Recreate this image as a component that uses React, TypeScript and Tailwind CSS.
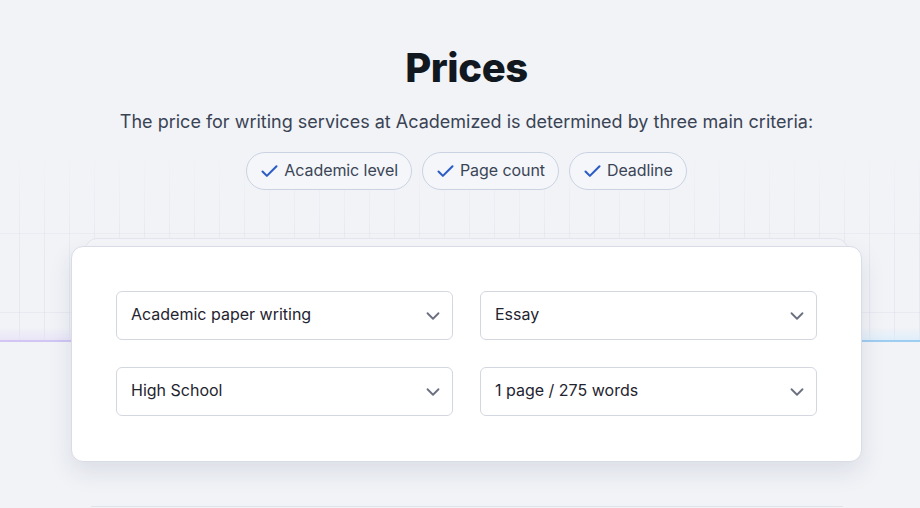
import { Check, ChevronDown } from "lucide-react";

const CRITERIA = ["Academic level", "Page count", "Deadline"];

const FIELDS = [
  "Academic paper writing",
  "Essay",
  "High School",
  "1 page / 275 words",
];

function Select({ value }: { value: string }) {
  return (
    <button
      type="button"
      className="flex h-[49px] w-full items-center justify-between rounded-md border border-[#d3d7df] bg-white pl-[14px] pr-[8px] text-left text-[16px] text-[#1f2430]"
    >
      <span className="-mt-[3px]">{value}</span>
      <ChevronDown size={22} strokeWidth={2} className="text-[#6b7080]" />
    </button>
  );
}

export default function App() {
  return (
    <div className="relative min-h-[508px] overflow-hidden bg-[#f1f3f7] font-['Inter',sans-serif]">
      {/* Background grid band, fades in from the top */}
      <div
        aria-hidden
        className="absolute inset-x-0 top-[154px] h-[186px] bg-[linear-gradient(to_right,rgba(205,210,224,0.3)_1px,transparent_1px),linear-gradient(to_bottom,rgba(205,210,224,0.25)_1px,transparent_1px)] bg-[size:25px_100%,100%_79px] bg-[position:19px_0,0_0] [mask-image:linear-gradient(to_bottom,transparent,black_55%)]"
      />
      {/* Glow line behind the card */}
      <div
        aria-hidden
        className="absolute inset-x-0 top-[328px] h-[12px] bg-gradient-to-r from-[#e6def8]/70 to-[#d7ecfa]/70 [mask-image:linear-gradient(to_bottom,transparent,black)]"
      />
      <div
        aria-hidden
        className="absolute inset-x-0 top-[340px] h-[2px] bg-gradient-to-r from-[#d3c5f4] to-[#9ccdf2]"
      />

      <section className="relative pl-[13px] pt-[44px] text-center">
        <h1 className="text-[40px] font-extrabold leading-[48px] tracking-[-0.01em] text-[#111820]">
          Prices
        </h1>
        <p className="mt-4 text-[18px] leading-[28px] text-[#3a4354]">
          The price for writing services at Academized is determined by three
          main criteria:
        </p>

        <div className="mt-4 flex justify-center gap-[10px]">
          {CRITERIA.map((c) => (
            <span
              key={c}
              className="inline-flex items-center gap-[4px] rounded-full border border-[#cbd3e3] bg-[#f4f6fa] pb-[7px] pl-3 pr-[13px] pt-[5px] text-[16px] leading-[24px] tracking-[-0.005em] text-[#3b4556]"
            >
              <Check size={21} strokeWidth={2.4} className="mt-[2px] text-[#2b5cc4]" />
              {c}
            </span>
          ))}
        </div>

        {/* Card with a ghost card stacked behind */}
        <div className="relative mx-auto mt-[56px] w-[791px]">
          <div
            aria-hidden
            className="absolute inset-x-[14px] -top-[8px] h-[40px] rounded-xl border border-[#e3e6ee] bg-[#f5f6f9]"
          />
          <div className="relative grid grid-cols-2 gap-[27px] rounded-xl border border-[#d8dce6] bg-white px-[44px] pb-[45px] pt-[44px] shadow-[0_10px_24px_rgba(30,40,80,0.10)]">
            {FIELDS.map((f) => (
              <Select key={f} value={f} />
            ))}
          </div>
        </div>

        <div className="mx-auto mt-[44px] h-px w-[752px] bg-[#dfe3ea]" />
      </section>
    </div>
  );
}
